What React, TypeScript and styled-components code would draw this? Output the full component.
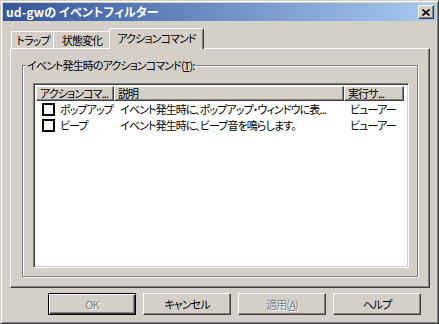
import React from "react";
import styled, { createGlobalStyle, css } from "styled-components";

const FONT = `"Noto Sans CJK JP", "Noto Sans", sans-serif`;

const Global = createGlobalStyle`
  html, body { margin: 0; padding: 0; background: #d4d0c8; }
  * { box-sizing: border-box; }
  body { font-family: ${FONT}; font-size: 11px; font-feature-settings: "palt"; letter-spacing: -0.9px; color: #000; }
`;

const Window = styled.div`
  width: 439px;
  height: 324px;
  background: #d4d0c8;
  border: 1px solid;
  border-color: #d4d0c8 #404040 #404040 #d4d0c8;
  box-shadow: inset 1px 1px #fff, inset -1px -1px #808080;
  padding: 2px;
  display: flex;
  flex-direction: column;
`;

const TitleBar = styled.div`
  height: 18px;
  background: linear-gradient(to right, #34569a, #a6caf0);
  display: flex;
  align-items: center;
  justify-content: space-between;
  padding: 0 2px 0 3px;
`;

const TitleText = styled.span`
  color: #fff;
  font-weight: bold;
  font-size: 12px;
  line-height: 18px;
  letter-spacing: 0.2px;
`;

const CloseButton = styled.div`
  background: #d4d0c8;
  border: 1px solid;
  border-color: #fff #404040 #404040 #fff;
  box-shadow: inset -1px -1px #808080;
  width: 16px;
  height: 14px;
  display: flex;
  align-items: center;
  justify-content: center;
`;

const Body = styled.div`
  padding: 7px 8px 0 7px;
  display: flex;
  flex-direction: column;
`;

const TabStrip = styled.div`
  height: 20px;
  display: flex;
  align-items: flex-end;
  padding-left: 1px;
  position: relative;
  z-index: 1;
`;

const Tab = styled.div<{ $active?: boolean; $w: number }>`
  width: ${(p) => p.$w}px;
  height: ${(p) => (p.$active ? "21px" : "17px")};
  margin: ${(p) => (p.$active ? "0 -2px -1px -2px" : "0")};
  padding-top: ${(p) => (p.$active ? "2px" : "1px")};
  text-align: center;
  background: #d4d0c8;
  border-top: 1px solid #fff;
  border-left: 1px solid #fff;
  border-right: 1px solid #404040;
  border-radius: 2px 2px 0 0;
  box-shadow: inset -1px 0 #808080;
  line-height: 14px;
  white-space: nowrap;
  & + & { margin-left: ${(p) => (p.$active ? "-2px" : "1px")}; }
`;

const Panel = styled.div`
  width: 420px;
  height: 240px;
  border: 1px solid;
  border-color: #fff #404040 #404040 #fff;
  box-shadow: inset -1px -1px #808080;
  padding: 16px 0 0 11px;
`;

const Group = styled.div`
  position: relative;
  width: 396px;
  height: 212px;
  border: 1px solid #808080;
  box-shadow: inset 1px 1px #fff, 1px 1px #fff;
  padding: 17px 0 0 10px;
`;

const GroupLabel = styled.span`
  position: absolute;
  top: -8px;
  left: 3px;
  padding: 0 1px;
  background: #d4d0c8;
  line-height: 14px;
  white-space: nowrap;
`;

const Mnemonic = styled.span`
  text-decoration: underline;
  text-underline-offset: 1px;
`;

const ListView = styled.div`
  width: 376px;
  height: 185px;
  background: #fff;
  border: 1px solid;
  border-color: #808080 #fff #fff #808080;
  box-shadow: inset 1px 1px #404040, inset -1px -1px #d4d0c8;
  padding: 2px;
  display: flex;
  flex-direction: column;
`;

const HeaderRow = styled.div`
  display: flex;
  height: 15px;
  flex: none;
`;

const HeaderCell = styled.div<{ $w: number }>`
  width: ${(p) => p.$w}px;
  flex: none;
  height: 15px;
  background: #d4d0c8;
  border-top: 1px solid #fff;
  border-left: 1px solid #fff;
  border-right: 1px solid #404040;
  border-bottom: 1px solid #404040;
  box-shadow: inset -1px -1px #808080;
  padding-left: 3px;
  display: flex;
  align-items: center;
  line-height: 13px;
  white-space: nowrap;
`;

const Row = styled.div`
  display: flex;
  height: 16px;
  flex: none;
  align-items: center;
`;

const Cell = styled.div<{ $w: number; $pl?: number }>`
  width: ${(p) => p.$w}px;
  flex: none;
  padding-left: ${(p) => p.$pl ?? 6}px;
  display: flex;
  align-items: center;
  white-space: nowrap;
  line-height: 16px;
`;

const Check = styled.span`
  width: 13px;
  height: 13px;
  border: 2px solid #000;
  background: #fff;
  flex: none;
  margin-right: 5px;
`;

const Footer = styled.div`
  display: flex;
  justify-content: flex-end;
  gap: 7px;
  padding: 5px 7px 0 0;
`;

const Button = styled.div<{ $default?: boolean; $disabled?: boolean }>`
  width: 88px;
  height: 22px;
  display: flex;
  align-items: center;
  justify-content: center;
  line-height: 14px;
  background: #d4d0c8;
  color: ${(p) => (p.$disabled ? "#808080" : "#000")};
  text-shadow: ${(p) => (p.$disabled ? "1px 1px #fff" : "none")};
  ${(p) =>
    p.$default
      ? css`
          border: 1px solid #000;
          box-shadow: inset 1px 1px #fff, inset -1px -1px #404040,
            inset -2px -2px #808080;
        `
      : css`
          border: 1px solid;
          border-color: #fff #404040 #404040 #fff;
          box-shadow: inset -1px -1px #808080;
        `}
`;

const cols = [78, 230, 60];

const rows = [
  { name: "ポップアップ", desc: "イベント発生時に、ポップアップ・ウィンドウに表...", exec: "ビューアー" },
  { name: "ビープ", desc: "イベント発生時に、ビープ音を鳴らします。", exec: "ビューアー" },
];

export default function App() {
  return (
    <>
      <Global />
      <Window>
        <TitleBar>
          <TitleText>ud-gwの イベントフィルター</TitleText>
          <CloseButton>
            <svg width="8" height="7" viewBox="0 0 8 7">
              <path d="M0.5 0.5 L7.5 6.5 M7.5 0.5 L0.5 6.5" stroke="#000" strokeWidth="1.6" fill="none" />
            </svg>
          </CloseButton>
        </TitleBar>
        <Body>
          <TabStrip>
            <Tab $w={44}>トラップ</Tab>
            <Tab $w={58}>状態変化</Tab>
            <Tab $active $w={95}>アクションコマンド</Tab>
          </TabStrip>
          <Panel>
            <Group>
              <GroupLabel>
                イベント発生時のアクションコマンド(<Mnemonic>T</Mnemonic>):
              </GroupLabel>
              <ListView>
                <HeaderRow>
                  <HeaderCell $w={cols[0]}>アクションコマ...</HeaderCell>
                  <HeaderCell $w={cols[1]}>説明</HeaderCell>
                  <HeaderCell $w={cols[2]}>実行サ...</HeaderCell>
                </HeaderRow>
                {rows.map((r) => (
                  <Row key={r.name}>
                    <Cell $w={cols[0]} $pl={6}>
                      <Check />
                      {r.name}
                    </Cell>
                    <Cell $w={cols[1]}>{r.desc}</Cell>
                    <Cell $w={cols[2]}>{r.exec}</Cell>
                  </Row>
                ))}
              </ListView>
            </Group>
          </Panel>
          <Footer>
            <Button $default $disabled>OK</Button>
            <Button>キャンセル</Button>
            <Button $disabled>
              適用(<Mnemonic>A</Mnemonic>)
            </Button>
            <Button>ヘルプ</Button>
          </Footer>
        </Body>
      </Window>
    </>
  );
}
